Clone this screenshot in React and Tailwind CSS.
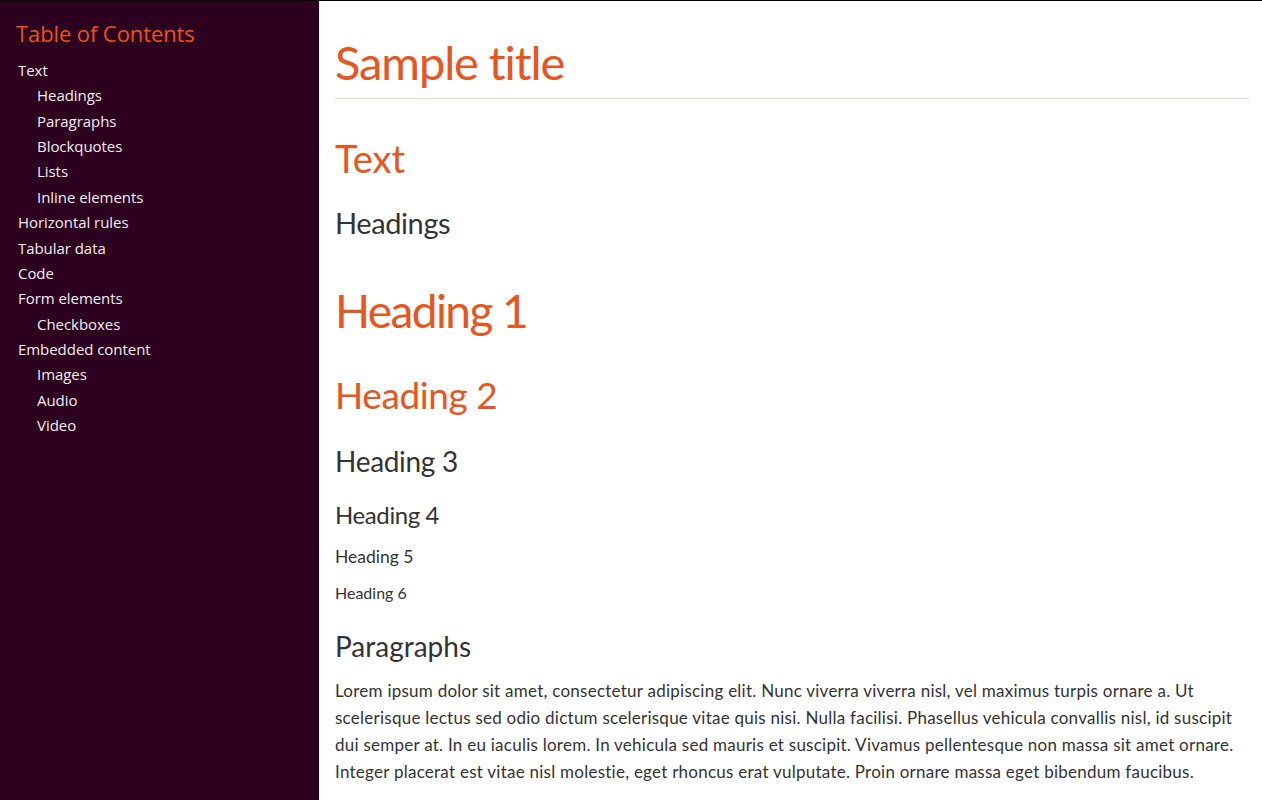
const TOC = [
  { label: 'Text', children: ['Headings', 'Paragraphs', 'Blockquotes', 'Lists', 'Inline elements'] },
  { label: 'Horizontal rules' },
  { label: 'Tabular data' },
  { label: 'Code' },
  { label: 'Form elements', children: ['Checkboxes'] },
  { label: 'Embedded content', children: ['Images', 'Audio', 'Video'] },
]

function Sidebar() {
  return (
    <aside className="w-[319px] shrink-0 bg-[#2c001e] px-4 font-['Open_Sans',sans-serif]">
      <h2 className="mt-[17px] text-[22px] leading-[30px] tracking-[-0.1px] text-[#e95420]">Table of Contents</h2>
      <ul className="mt-[10px] pl-[2px] text-[15px] leading-[25.36px] tracking-[-0.05px] text-[#f2eef0]">
        {TOC.map(item => (
          <li key={item.label}>
            {item.label}
            {item.children && (
              <ul className="pl-[19px]">
                {item.children.map(c => <li key={c}>{c}</li>)}
              </ul>
            )}
          </li>
        ))}
      </ul>
    </aside>
  )
}

export default function App() {
  return (
    <div className="flex h-[800px] overflow-hidden border-t border-black bg-white">
      <Sidebar />

      <main className="flex-1 min-w-0 pl-4 pr-[13px] font-['Lato','Noto_Sans',sans-serif] text-[#333333]">
        <h1 className="mt-[33px] border-b border-[#dfdcd5] pb-[8px] text-[47px] leading-[56px] tracking-[-1.1px] text-[#e95420]">Sample title</h1>

        <h2 className="mt-[37px] text-[38px] leading-[44px] text-[#e95420]">Text</h2>
        <h3 className="mt-[25px] text-[29px] leading-[36px] tracking-[-0.4px]">Headings</h3>

        <h1 className="mt-[42px] text-[46px] leading-[56px] tracking-[-1.6px] text-[#e95420]">Heading 1</h1>
        <h2 className="mt-[34px] text-[37px] leading-[44px] tracking-[-0.4px] text-[#e95420]">Heading 2</h2>
        <h3 className="mt-[27px] text-[28px] leading-[34px] tracking-[-0.3px]">Heading 3</h3>
        <h4 className="mt-[23px] text-[24px] leading-[28px] tracking-[-0.4px]">Heading 4</h4>
        <h5 className="mt-[16px] text-[17.5px] leading-[24px]">Heading 5</h5>
        <h6 className="mt-[14px] text-[16px] leading-[20px]">Heading 6</h6>

        <h3 className="mt-[26px] text-[28px] leading-[34px]">Paragraphs</h3>
        <p className="mt-[14px] text-[17px] leading-[27px] tracking-[0.25px]">
          Lorem ipsum dolor sit amet, consectetur adipiscing elit. Nunc viverra viverra nisl, vel maximus turpis ornare a. Ut scelerisque lectus sed odio dictum scelerisque vitae quis nisi. Nulla facilisi. Phasellus vehicula convallis nisl, id suscipit dui semper at. In eu iaculis lorem. In vehicula sed mauris et suscipit. Vivamus pellentesque non massa sit amet ornare. Integer placerat est vitae nisl molestie, eget rhoncus erat vulputate. Proin ornare massa eget bibendum faucibus.
        </p>
      </main>
    </div>
  )
}
